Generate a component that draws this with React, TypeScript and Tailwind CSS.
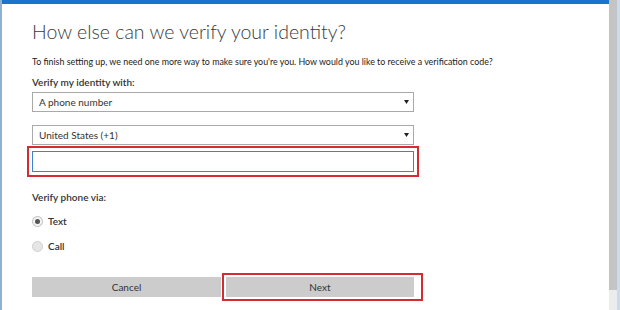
import React from 'react'

function Select({ value }: { value: string }) {
  return (
    <div className="flex h-[20px] w-[382px] items-center justify-between border border-[#a9a9a9] bg-white pl-[6px] pr-[4px] text-[10px] text-[#333]">
      <span>{value}</span>
      <svg width="5" height="4" viewBox="0 0 5 4">
        <path d="M0 0 L5 0 L2.5 4 Z" fill="#222" />
      </svg>
    </div>
  )
}

function Radio({ label, checked }: { label: string; checked?: boolean }) {
  return (
    <div className="flex items-center gap-[5px] text-[10px] font-semibold leading-[14px] text-[#333]">
      <div
        className={
          checked
            ? 'flex h-[11px] w-[11px] items-center justify-center rounded-full border border-[#bdbdbd] bg-[#f4f4f4]'
            : 'h-[11px] w-[11px] rounded-full border border-[#d0d0d0] bg-[#e6e6e6]'
        }
      >
        {checked && <div className="h-[5px] w-[5px] rounded-full bg-[#555]" />}
      </div>
      <span>{label}</span>
    </div>
  )
}

export default function App() {
  return (
    <div className="flex h-[310px] w-[620px] bg-white font-['Lato',sans-serif]">
      <div className="w-[2px] bg-[#8fb1cf]" />
      <div className="flex flex-1 flex-col">
        <div className="h-[4px] bg-[#1b74cc]" />
        <div className="flex flex-col pl-[30px] pt-[16px]">
          <h1 className="text-[19.5px] font-light leading-[24px] text-[#3a3a3a]">
            How else can we verify your identity?
          </h1>
          <p className="mt-[12px] text-[8.9px] leading-[12px] text-[#222]">
            To finish setting up, we need one more way to make sure you're you. How would you like to receive a verification code?
          </p>
          <div className="mt-[8px] text-[10px] font-semibold leading-[12px] text-[#333]">Verify my identity with:</div>
          <div className="mt-[4px]">
            <Select value="A phone number" />
          </div>
          <div className="mt-[13px]">
            <Select value="United States (+1)" />
          </div>
          <div className="-ml-[5px] mt-[1px] w-[392px] border-2 border-[#d52b32] p-[3px]">
            <div className="h-[21px] w-[382px] border border-[#3d82cf] bg-white" />
          </div>
          <div className="mt-[14px] text-[10px] font-semibold leading-[12px] text-[#333]">Verify phone via:</div>
          <div className="mt-[11px] flex flex-col gap-[11px]">
            <Radio label="Text" checked />
            <Radio label="Call" />
          </div>
          <div className="mt-[20px] flex items-center">
            <button className="mr-[1px] h-[20px] w-[189px] bg-[#cccccc] text-[10px] text-[#333]">Cancel</button>
            <div className="flex border-2 border-[#d52b32] py-[2px] pl-[2px] pr-[7px]">
              <button className="h-[20px] w-[188px] bg-[#cccccc] text-[10px] text-[#333]">Next</button>
            </div>
          </div>
        </div>
      </div>
      <div className="flex w-[8px] flex-col bg-[#ececec]">
        <div className="h-[290px] bg-[#c4c4c4]" />
      </div>
      <div className="w-[3px] bg-[#c9dcef]" />
    </div>
  )
}
